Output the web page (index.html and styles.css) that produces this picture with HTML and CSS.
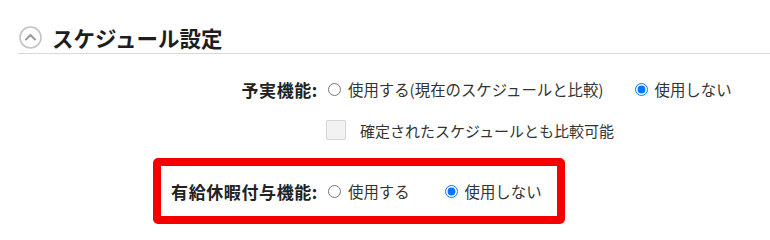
FILE: index.html
```html
<!DOCTYPE html>
<html lang="ja">
<head>
<meta charset="utf-8">
<link rel="stylesheet" href="styles.css">
</head>
<body>
<div class="header">
  <svg class="toggle" width="23" height="23" viewBox="0 0 23 23">
    <circle cx="11.5" cy="11.5" r="10.5" fill="#fff" stroke="#c4c4c4" stroke-width="1.6"/>
    <path d="M7 13.5 L11.5 9 L16 13.5" fill="none" stroke="#9a9a9a" stroke-width="2" stroke-linecap="round" stroke-linejoin="round"/>
  </svg>
  <h2 class="title">スケジュール設定</h2>
</div>

<div class="row row-plan">
  <div class="label">予実機能:</div>
  <label class="opt"><input type="radio" name="plan"><span>使用する(現在のスケジュールと比較)</span></label>
  <label class="opt"><input type="radio" name="plan" checked><span>使用しない</span></label>
</div>

<div class="row row-check">
  <div class="label"></div>
  <span class="checkbox"></span>
  <span class="check-text">確定されたスケジュールとも比較可能</span>
</div>

<div class="highlight">
  <div class="row row-leave">
    <div class="label label-leave">有給休暇付与機能:</div>
    <label class="opt"><input type="radio" name="leave"><span>使用する</span></label>
    <label class="opt opt-wide"><input type="radio" name="leave" checked><span>使用しない</span></label>
  </div>
</div>
</body>
</html>
```

FILE: styles.css
```css
html, body {
  margin: 0;
  padding: 0;
  background: #fff;
}

body {
  font-family: "Noto Sans CJK JP", "Noto Sans", sans-serif;
  color: #333;
  width: 770px;
  height: 232px;
  overflow: hidden;
}

.header {
  display: flex;
  align-items: center;
  gap: 10px;
  margin: 22px 0 0 18px;
  height: 31px;
  border-bottom: 1px solid #d9d9d9;
}

.toggle {
  margin-left: 1px;
  flex: none;
}

.title {
  margin: 0;
  font-size: 21.5px;
  font-weight: 700;
  color: #1e1e1e;
  line-height: 1;
}

.row {
  display: flex;
  align-items: center;
  height: 30px;
  white-space: nowrap;
}

.row-plan {
  margin-top: 20px;
}

.row-check {
  margin-top: 11px;
}

.label {
  width: 318px;
  flex: none;
  text-align: right;
  font-size: 17px;
  font-weight: 700;
  letter-spacing: 0.6px;
  color: #222;
  margin-right: 10px;
}

.opt {
  display: flex;
  align-items: center;
  flex: none;
  font-size: 15.4px;
  color: #333;
  margin-right: 31px;
}

.opt input {
  margin: 0;
  width: 13px;
  height: 13px;
  flex: none;
}

.opt span {
  margin-left: 7px;
}

.checkbox {
  width: 18px;
  height: 18px;
  border: 1px solid #d6d6d6;
  border-radius: 2px;
  background: #f2f2f2;
  margin-left: -2px;
  flex: none;
}

.check-text {
  margin-left: 14px;
  font-size: 15px;
  color: #333;
}

.highlight {
  margin: 13px 0 0 153px;
  width: 396px;
  border: 8px solid #f50000;
  border-radius: 5px;
  height: 50px;
  display: flex;
  align-items: center;
}

.row-leave {
  width: 100%;
}

.row-leave .opt:first-of-type {
  margin-right: 35px;
}

.label-leave {
  width: 148px;
  margin-left: 9px;
}
```
